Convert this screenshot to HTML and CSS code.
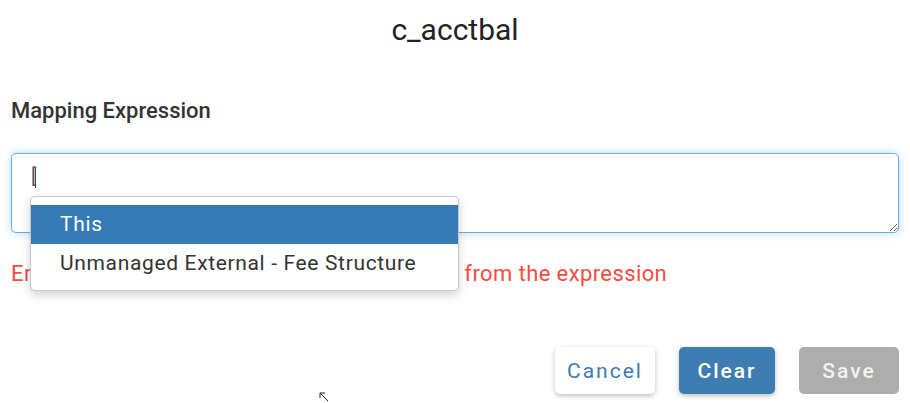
FILE: index.html
```html
<!DOCTYPE html>
<html lang="en">
<head>
  <meta charset="UTF-8" />
  <title>c_acctbal</title>
  <link rel="stylesheet" href="styles.css">
</head>
<body>
  <div class="dialog">
    <h1 class="title">c_acctbal</h1>

    <label class="field-label" for="expr">Mapping Expression</label>
    <div class="editor">
      <textarea id="expr" class="expr-input">[</textarea>
      <span class="caret"></span>
      <ul class="suggestions">
        <li class="active">This</li>
        <li>Unmanaged External - Fee Structure</li>
      </ul>
    </div>

    <p class="error">Error: Please remove the unknown character from the expression</p>

    <div class="actions">
      <button class="btn btn-cancel">Cancel</button>
      <button class="btn btn-clear">Clear</button>
      <button class="btn btn-save" disabled>Save</button>
    </div>
  </div>

  <svg class="pointer" width="12" height="12" viewBox="0 0 12 12">
    <path d="M1 1 L1 6 M1 1 L6 1 M1 1 L9 9" stroke="#222" stroke-width="1" fill="none"/>
  </svg>
</body>
</html>
```

FILE: styles.css
```css
body {
  margin: 0;
  font-family: Roboto, "Liberation Sans", sans-serif;
  background-color: #ffffff;
  color: #333;
  width: 910px;
  height: 403px;
  overflow: hidden;
  position: relative;
}

.dialog {
  padding: 0 11px 0 11px;
}

.title {
  margin: 0;
  padding-top: 13px;
  font-size: 30px;
  font-weight: 400;
  color: #222;
  text-align: center;
  line-height: 34px;
}

.field-label {
  display: block;
  margin-top: 51px;
  font-size: 22px;
  font-weight: 500;
  color: #333;
  line-height: 26px;
}

.editor {
  position: relative;
  margin-top: 29px;
}

.expr-input {
  display: block;
  box-sizing: border-box;
  width: 888px;
  height: 80px;
  margin: 0;
  padding: 10px 19px;
  border: 1px solid #66afe9;
  border-radius: 5px;
  box-shadow: 0 0 8px rgba(102, 175, 233, 0.45);
  font-family: Roboto, "Liberation Sans", sans-serif;
  font-size: 20px;
  color: #555;
  outline: none;
  resize: vertical;
}

.caret {
  position: absolute;
  left: 24px;
  top: 15px;
  width: 1px;
  height: 20px;
  background-color: #444;
}

.suggestions {
  position: absolute;
  left: 19px;
  top: 43px;
  width: 429px;
  margin: 0;
  padding: 8px 0 7px 0;
  list-style: none;
  background-color: #fff;
  border: 1px solid #c8c8c8;
  border-radius: 5px;
  box-shadow: 0 4px 10px rgba(0, 0, 0, 0.18);
  box-sizing: border-box;
  z-index: 2;
}

.suggestions li {
  height: 39px;
  line-height: 39px;
  padding-left: 29px;
  font-size: 21px;
  letter-spacing: 0.65px;
  color: #333;
}

.suggestions li.active {
  background-color: #337ab7;
  color: #fff;
}

.error {
  margin: 28px 0 0 0;
  font-size: 22px;
  line-height: 26px;
  color: #f44b42;
  letter-spacing: 0.4px;
}

.actions {
  display: flex;
  justify-content: flex-end;
  gap: 24px;
  margin-top: 60px;
}

.btn {
  height: 47px;
  padding: 0;
  border: none;
  border-radius: 5px;
  font-family: Roboto, "Liberation Sans", sans-serif;
  font-size: 21px;
  font-weight: 500;
  letter-spacing: 2px;
  cursor: pointer;
}

.btn-cancel {
  width: 100px;
  background-color: #fff;
  color: #3c7bb5;
  font-weight: 400;
  box-shadow: 0 2px 5px rgba(0, 0, 0, 0.25);
}

.btn-clear {
  width: 96px;
  background-color: #3e7db2;
  color: #fff;
  box-shadow: 0 2px 5px rgba(0, 0, 0, 0.25);
}

.btn-save {
  width: 100px;
  background-color: #adadad;
  color: #f2f2f2;
}

.pointer {
  position: absolute;
  left: 319px;
  top: 392px;
}
```
